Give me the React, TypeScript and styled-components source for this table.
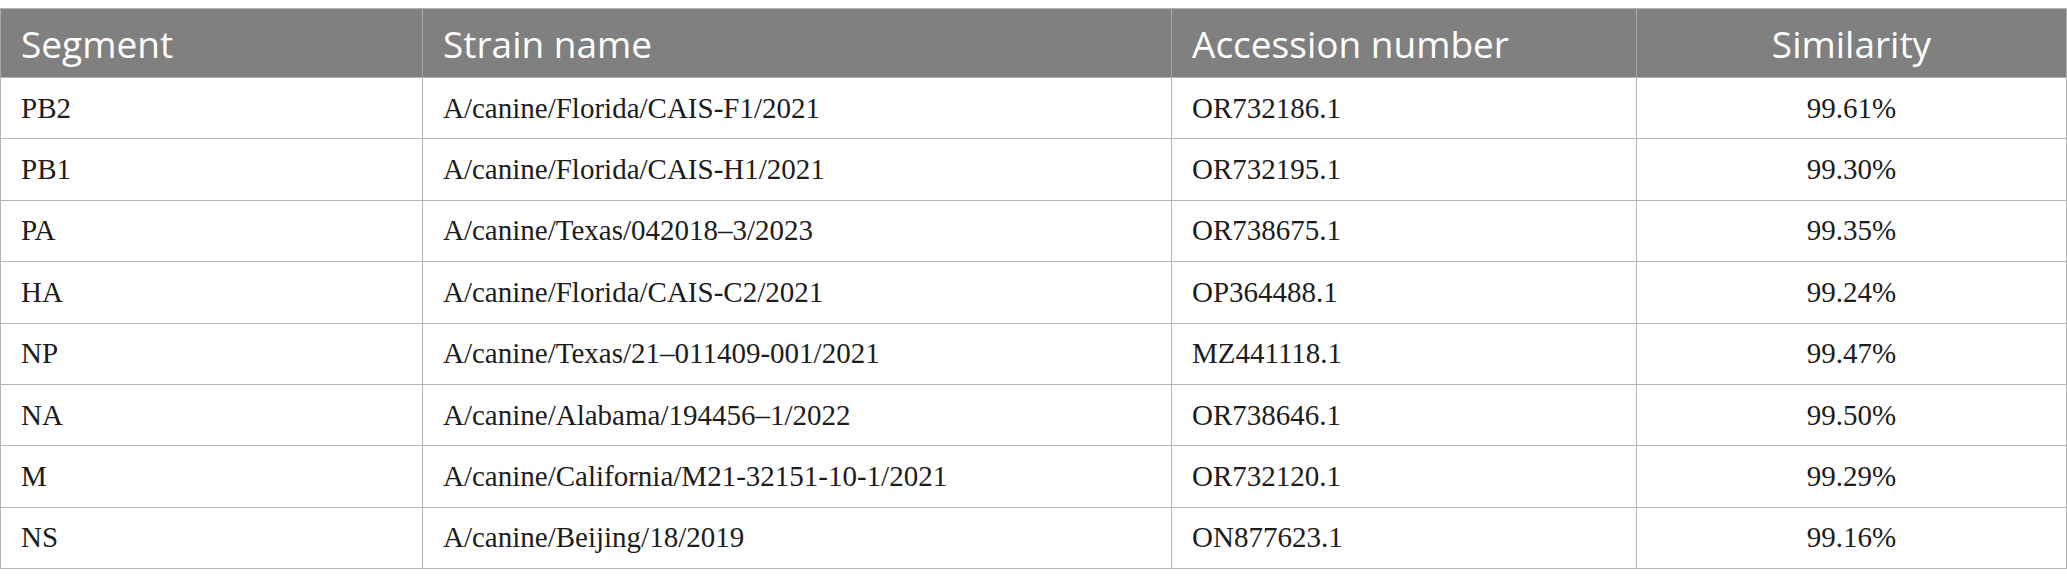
import React from "react";
import styled, { createGlobalStyle } from "styled-components";

const Global = createGlobalStyle`
  html, body { margin: 0; padding: 0; background: #ffffff; }
`;

const Page = styled.div`
  padding-top: 8px;
  width: 2067px;
  box-sizing: border-box;
`;

const Table = styled.table`
  width: 2066px;
  border-collapse: collapse;
  table-layout: fixed;
  border: 1px solid #b3b3b3;
`;

const HeadRow = styled.tr`
  height: 69px;
  background: #7f807f;
`;

const HeadCell = styled.th<{ $center?: boolean }>`
  font-family: "Open Sans", "Noto Sans", sans-serif;
  font-weight: 400;
  font-size: 37px;
  color: #ffffff;
  text-align: ${(p) => (p.$center ? "center" : "left")};
  padding: 0 20px;
  border-left: 1px solid #a9a9a9;
  vertical-align: middle;
  line-height: 1;
`;

const Row = styled.tr`
  height: 61.4px;
  background: #ffffff;
`;

const Cell = styled.td<{ $center?: boolean }>`
  font-family: "Liberation Serif", "Times New Roman", serif;
  font-size: 29px;
  color: #1c1c1c;
  text-align: ${(p) => (p.$center ? "center" : "left")};
  padding: 0 20px;
  border: 1px solid #b3b3b3;
  vertical-align: middle;
  line-height: 1;
`;

const rows: [string, string, string, string][] = [
  ["PB2", "A/canine/Florida/CAIS-F1/2021", "OR732186.1", "99.61%"],
  ["PB1", "A/canine/Florida/CAIS-H1/2021", "OR732195.1", "99.30%"],
  ["PA", "A/canine/Texas/042018\u20133/2023", "OR738675.1", "99.35%"],
  ["HA", "A/canine/Florida/CAIS-C2/2021", "OP364488.1", "99.24%"],
  ["NP", "A/canine/Texas/21\u2013011409-001/2021", "MZ441118.1", "99.47%"],
  ["NA", "A/canine/Alabama/194456\u20131/2022", "OR738646.1", "99.50%"],
  ["M", "A/canine/California/M21-32151-10-1/2021", "OR732120.1", "99.29%"],
  ["NS", "A/canine/Beijing/18/2019", "ON877623.1", "99.16%"],
];

export default function App() {
  return (
    <Page>
      <Global />
      <Table>
        <colgroup>
          <col style={{ width: "422px" }} />
          <col style={{ width: "749px" }} />
          <col style={{ width: "465px" }} />
          <col style={{ width: "430px" }} />
        </colgroup>
        <thead>
          <HeadRow>
            <HeadCell>Segment</HeadCell>
            <HeadCell>Strain name</HeadCell>
            <HeadCell>Accession number</HeadCell>
            <HeadCell $center>Similarity</HeadCell>
          </HeadRow>
        </thead>
        <tbody>
          {rows.map((r) => (
            <Row key={r[0]}>
              <Cell>{r[0]}</Cell>
              <Cell>{r[1]}</Cell>
              <Cell>{r[2]}</Cell>
              <Cell $center>{r[3]}</Cell>
            </Row>
          ))}
        </tbody>
      </Table>
    </Page>
  );
}
